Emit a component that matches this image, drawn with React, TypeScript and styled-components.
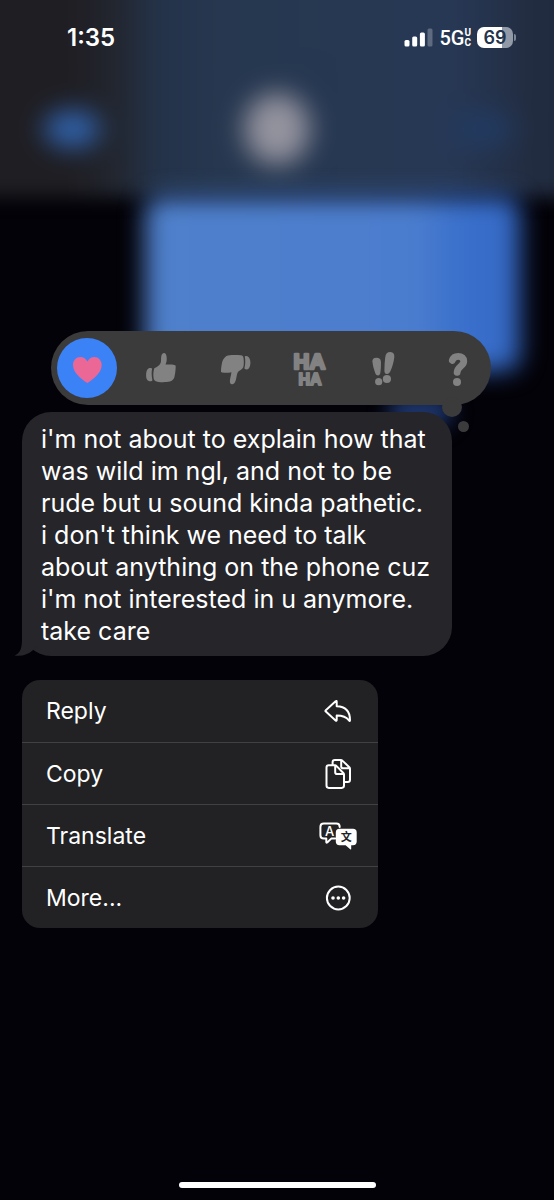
import React from "react";
import styled, { createGlobalStyle } from "styled-components";

const GlobalStyle = createGlobalStyle`
  * { box-sizing: border-box; }
  body {
    margin: 0;
    background: #030208;
    font-family: Inter, "Liberation Sans", sans-serif;
    -webkit-font-smoothing: antialiased;
  }
  button { font: inherit; color: inherit; border: 0; margin: 0; background: none; }
`;

const Screen = styled.div`
  position: relative;
  min-height: 100vh;
  display: flex;
  flex-direction: column;
  overflow: hidden;
  color: #fff;
  background: #030208;
`;

/* Blurred conversation behind the overlay */
const Backdrop = styled.div`
  position: absolute;
  inset: 0;
  overflow: hidden;
`;

const BlurredHeader = styled.div`
  display: flex;
  align-items: center;
  justify-content: space-between;
  height: 237px;
  margin: -40px -40px 0;
  padding: 100px 80px 0 84px;
  filter: blur(9px);
  background: linear-gradient(
    90deg,
    #1f1e22 0,
    #1f1e23 110px,
    #22262f 155px,
    #24334a 200px,
    #26374f 260px,
    #273855 calc(100% - 140px),
    #222c40 calc(100% - 60px),
    #202a3e 100%
  );
`;

const Glow = styled.div<{ $w: number; $h: number; $color: string }>`
  width: ${(p) => p.$w}px;
  height: ${(p) => p.$h}px;
  border-radius: 50%;
  background: ${(p) => p.$color};
  filter: blur(10px);
`;

const BlurredBubble = styled.div`
  height: 174px;
  margin: 0 34px 0 145px;
  border-radius: 16px;
  background: linear-gradient(90deg, #4f80cb 0, #4b7dce 72%, #3a70cc 84%, #3468c4 100%);
  filter: blur(12px);
`;

const BlurredTail = styled.div`
  width: 64px;
  height: 30px;
  margin: 26px 102px 0 auto;
  border-radius: 15px;
  background: #1f3870;
  filter: blur(10px);
`;

const StatusBar = styled.header`
  position: relative;
  display: flex;
  align-items: center;
  justify-content: space-between;
  height: 75px;
  padding: 0 38px 0 67px;
`;

const Clock = styled.time`
  font-size: 24px;
  font-weight: 600;
  line-height: 24px;
`;

const StatusIcons = styled.div`
  display: flex;
  align-items: center;
  gap: 6px;
`;

const Network = styled.div`
  display: flex;
  align-items: center;
  font-family: Roboto, sans-serif;
  font-size: 20px;
  font-weight: 500;
  line-height: 20px;
`;

const NetworkSub = styled.span`
  display: flex;
  flex-direction: column;
  font-size: 10px;
  font-weight: 700;
  line-height: 10px;
`;

const Battery = styled.div`
  display: flex;
  align-items: center;
  gap: 1px;
`;

const BatteryBody = styled.div<{ $level: number }>`
  width: 36px;
  height: 21px;
  border-radius: 7px;
  text-align: center;
  font-size: 18px;
  font-weight: 600;
  line-height: 21px;
  color: #25344d;
  background: linear-gradient(90deg, #fff ${(p) => p.$level}%, #929aa8 ${(p) => p.$level}%);
`;

const BatteryNub = styled.div`
  width: 2px;
  height: 7px;
  border-radius: 0 2px 2px 0;
  background: #7e8797;
`;

const Content = styled.main`
  position: relative;
  display: flex;
  flex-direction: column;
  align-items: flex-start;
  padding: 256px 22px 0;
`;

const ReactionBar = styled.div`
  position: relative;
  display: flex;
  justify-content: space-between;
  align-items: center;
  width: 100%;
  max-width: 440px;
  height: 74px;
  margin: 0 0 7px 29px;
  padding: 0 4px 0 6px;
  border-radius: 37px;
  background: #3b3b3c;
`;

const Reaction = styled.button<{ $selected?: boolean }>`
  width: 60px;
  height: 60px;
  padding: 0;
  border-radius: 50%;
  color: #828282;
  background: ${(p) => (p.$selected ? "#3b82f7" : "transparent")};
  svg { display: block; }
`;

const ThoughtDot = styled.span<{ $size: number; $right: number; $drop: number }>`
  position: absolute;
  width: ${(p) => p.$size}px;
  height: ${(p) => p.$size}px;
  right: ${(p) => p.$right}px;
  bottom: ${(p) => -p.$drop}px;
  border-radius: 50%;
  background: #3b3b3c;
`;

const Bubble = styled.article`
  position: relative;
  width: 100%;
  max-width: 430px;
  padding: 11px 18px 9px 19px;
  border-radius: 29px;
  background: #26252a;
`;

const BubbleText = styled.p`
  margin: 0;
  font-size: 25px;
  line-height: 32px;
  white-space: pre-line;
`;

const BubbleTail = styled.svg`
  position: absolute;
  left: -8px;
  bottom: 0;
`;

const Menu = styled.ul`
  width: 100%;
  max-width: 356px;
  margin: 24px 0 0;
  padding: 0;
  list-style: none;
  border-radius: 18px;
  overflow: hidden;
  background: #222224;
`;

const MenuRow = styled.li`
  display: flex;
  height: 62px;
  & + & { border-top: 1px solid #414143; }
`;

const MenuButton = styled.button`
  display: flex;
  flex: 1;
  align-items: center;
  justify-content: space-between;
  padding: 0 20px 0 24px;
  font-size: 23px;
  line-height: 32px;
`;

const HomeIndicator = styled.div`
  position: relative;
  width: 197px;
  height: 6px;
  margin: auto auto 12px;
  border-radius: 3px;
  background: #fff;
`;

const SignalIcon = () => (
  <svg width="29" height="20" viewBox="0 0 29 20" fill="#fff" role="img" aria-label="Signal">
    <rect x="0.5" y="12" width="5" height="6.5" rx="1.5" />
    <rect x="8.2" y="8.5" width="5" height="10" rx="1.5" />
    <rect x="15.9" y="4.5" width="5" height="14" rx="1.5" />
    <rect x="23.5" y="0.5" width="5" height="18" rx="1.5" opacity="0.25" />
  </svg>
);

const ReactionSvg = ({ children }: { children: React.ReactNode }) => (
  <svg width="60" height="60" viewBox="0 0 60 60" fill="currentColor" aria-hidden="true">
    {children}
  </svg>
);

const Heart = () => (
  <ReactionSvg>
    <path
      fill="#eb6796"
      d="M30.4 45C24 41 16 34.5 16 27C16 22.3 19.3 19 23.4 19C26.6 19 29 20.8 30.4 23.6C31.8 20.8 34.2 19 37.3 19C41.4 19 44.7 22.3 44.7 27C44.7 34.5 36.8 41 30.4 45Z"
    />
  </ReactionSvg>
);

const ThumbUp = () => (
  <ReactionSvg>
    <path d="M23.3 30.2C26 29.2 29.4 27 29.9 24C30.3 21.5 29.8 19.8 30.4 17.8C30.9 16 31.8 15 33 15C34.4 15 35.1 16.1 35.4 17.8C35.8 20 35.9 22 35.4 24L34.5 26.6C37.5 26.4 41 26.4 43.3 26.9C44.4 27.1 44.8 27.6 44.7 28.6C44.6 31 44.5 34 43.8 37C43.5 39 43 41 41.6 42.1C39.8 43.5 37.9 44 35.6 44.1C32.4 44.3 29.3 44.3 26.4 43.7C24 43.1 22.9 42 22.6 40.2C22.2 37 22.2 33.5 23.3 30.2Z" />
    <path d="M17.8 30.2C19.3 29.7 20.9 29.9 21.1 30.8C20.4 34 20.5 38 21.4 42.2C21.2 43.3 19.3 43.6 17.7 43C15.9 42.3 15.1 40.5 15.1 37.3C15.1 33.8 15.9 30.9 17.8 30.2Z" />
  </ReactionSvg>
);

const ThumbDown = () => (
  <ReactionSvg>
    <path d="M20 19.2C21.8 17.4 24 17.1 26.7 17C29.8 16.8 32.9 16.8 35.8 17.3C37.5 17.6 38.3 18.4 38.5 19.9C38.9 22.4 39 25.2 38.6 27.8C38.3 30 37.2 31 35.6 32.1C33.8 33.2 32.7 34 32.2 35.7C31.4 38.4 31.3 41.4 30.2 43.8C29.5 45.5 28.3 46.4 27 46.2C25.4 46 24.8 44.7 24.9 42.9C25 40.4 26.1 37.6 26.4 34.3C23.3 35 19.8 35 17.1 34.5C16.1 34.3 15.9 33.7 16 32.7C16.1 30.5 16.3 28 17 25C17.5 22.6 18.4 20.8 20 19.2Z" />
    <path d="M39.8 18.4C40.7 17.7 42.5 18 43.5 18.9C44.9 20.2 45.5 22.5 45.4 25.2C45.3 28 44.3 30.5 42.6 31.2C41.1 31.8 39.7 31.2 39.4 30.3C40.4 26.8 40.5 22 39.8 18.4Z" />
  </ReactionSvg>
);

const HaHa = () => (
  <ReactionSvg>
    <g
      fontFamily='"Liberation Sans", sans-serif'
      fontWeight="700"
      stroke="currentColor"
      strokeLinejoin="round"
      textAnchor="middle"
    >
      <text x="30.4" y="31.2" fontSize="22" strokeWidth="2.6">HA</text>
      <text x="31" y="46.6" fontSize="16" strokeWidth="2">HA</text>
    </g>
  </ReactionSvg>
);

const Bangs = () => (
  <ReactionSvg>
    <path d="M19.4 23.6C19.2 21.2 20.6 19.9 23.3 19.7C26 19.6 27.7 20.8 27.9 23.5C28.1 27.5 27.8 31.5 27.3 35C27 36.7 26.3 37.4 25.1 37.4C23.8 37.4 22.9 36.7 22.3 35.2C20.9 31.6 19.8 27.6 19.4 23.6Z" />
    <circle cx="25.7" cy="43.7" r="3.6" />
    <path d="M32.2 19.4C32.6 15.8 34.4 14 37.5 14.1C40.4 14.2 41.6 16 41.3 19.3C40.8 24 39.4 29 37.5 33C36.5 35.2 35.3 36.2 33.7 36C32.1 35.8 31.4 34.6 31.4 32.4C31.4 28 31.7 23.5 32.2 19.4Z" />
    <circle cx="33.9" cy="41" r="4.1" />
  </ReactionSvg>
);

const Question = () => (
  <ReactionSvg>
    <path
      d="M25.3 22.4C26.2 19.6 28.3 18.3 31.2 18.3C34.6 18.3 36.8 20.2 36.8 23.2C36.8 28.2 30.4 28.4 30.1 34.4"
      fill="none"
      stroke="currentColor"
      strokeWidth="6.8"
      strokeLinecap="round"
      strokeLinejoin="round"
    />
    <circle cx="30" cy="44" r="4" />
  </ReactionSvg>
);

const MenuSvg = ({ children }: { children: React.ReactNode }) => (
  <svg
    width="39"
    height="32"
    viewBox="0 0 39 32"
    fill="none"
    stroke="#fff"
    strokeWidth="2"
    strokeLinejoin="round"
    strokeLinecap="round"
    aria-hidden="true"
  >
    {children}
  </svg>
);

const ReplyIcon = () => (
  <MenuSvg>
    <path d="M6.8 15.2L16.6 6.3Q17.7 5.5 17.7 6.8V11.2C26.4 11.4 31 16.4 31 25.2Q30.9 26.6 30 25.4C27.3 21.8 23.8 20.5 17.7 20.5V25Q17.7 26.3 16.6 25.4L6.8 16.6Q6 15.9 6.8 15.2Z" />
  </MenuSvg>
);

const CopyIcon = () => (
  <MenuSvg>
    <path d="M16 7.2H9.8Q7.5 7.2 7.5 9.5V27.6Q7.5 29.9 9.8 29.9H22.7Q25 29.9 25 27.6V16.6Q25 15.7 24.3 15L17.4 7.9Q16.8 7.2 16 7.2ZM16.2 7.6V14.2Q16.2 16 18 16H24.6" />
    <path d="M13.6 6.8V4.2Q13.6 1.9 15.9 1.9H21.9Q22.7 1.9 23.4 2.6L30.3 9.2Q31 9.9 31 10.8V21.7Q31 24 28.7 24H25.4M22.2 2.3V8.4Q22.2 10.2 24 10.2H30.6" />
  </MenuSvg>
);

const TranslateIcon = () => (
  <MenuSvg>
    <path d="M16.2 18.6H12.2L8.2 22.4Q7.3 23 7.3 22V18.6H4.8Q1.4 18.6 1.4 15.2V7Q1.4 3.6 4.8 3.6H17.3Q20.7 3.6 20.7 7" />
    <path
      d="M20.5 8.8H34Q37.7 8.8 37.7 12.5V21.6Q37.7 25.3 34 25.3H32.2V28.8Q32.2 30 31.2 29.2L26.6 25.3H20.5Q16.8 25.3 16.8 21.6V12.5Q16.8 8.8 20.5 8.8Z"
      fill="#fff"
      stroke="none"
    />
    <g stroke="none" textAnchor="middle">
      <text x="10.7" y="15.8" fill="#fff" fontFamily="Inter, sans-serif" fontSize="13" fontWeight="500">A</text>
      <text x="27.2" y="21.2" fill="#222224" fontFamily='"Noto Sans CJK SC", sans-serif' fontSize="11" fontWeight="700">文</text>
    </g>
  </MenuSvg>
);

const MoreIcon = () => (
  <MenuSvg>
    <circle cx="19.3" cy="16" r="11.4" />
    <g fill="#fff" stroke="none">
      <circle cx="14" cy="16" r="1.8" />
      <circle cx="19.3" cy="16" r="1.8" />
      <circle cx="24.6" cy="16" r="1.8" />
    </g>
  </MenuSvg>
);

const reactions = [
  { label: "Love", Icon: Heart, selected: true },
  { label: "Like", Icon: ThumbUp },
  { label: "Dislike", Icon: ThumbDown },
  { label: "Laugh", Icon: HaHa },
  { label: "Emphasize", Icon: Bangs },
  { label: "Question", Icon: Question },
];

const actions = [
  { label: "Reply", Icon: ReplyIcon },
  { label: "Copy", Icon: CopyIcon },
  { label: "Translate", Icon: TranslateIcon },
  { label: "More...", Icon: MoreIcon },
];

const message = `i'm not about to explain how that
was wild im ngl, and not to be
rude but u sound kinda pathetic.
i don't think we need to talk
about anything on the phone cuz
i'm not interested in u anymore.
take care`;

export default function App() {
  return (
    <Screen>
      <GlobalStyle />
      <Backdrop aria-hidden="true">
        <BlurredHeader>
          <Glow $w={56} $h={36} $color="#3266b2" />
          <Glow $w={66} $h={72} $color="#95949f" />
          <Glow $w={60} $h={36} $color="#223b62" />
        </BlurredHeader>
        <BlurredBubble />
        <BlurredTail />
      </Backdrop>

      <StatusBar>
        <Clock>1:35</Clock>
        <StatusIcons>
          <SignalIcon />
          <Network>
            5G
            <NetworkSub>
              <span>U</span>
              <span>C</span>
            </NetworkSub>
          </Network>
          <Battery>
            <BatteryBody $level={70}>69</BatteryBody>
            <BatteryNub />
          </Battery>
        </StatusIcons>
      </StatusBar>

      <Content>
        <ReactionBar role="group" aria-label="Reactions">
          {reactions.map(({ label, Icon, selected }) => (
            <Reaction key={label} type="button" aria-label={label} $selected={selected}>
              <Icon />
            </Reaction>
          ))}
          <ThoughtDot $size={20} $right={29} $drop={12} />
          <ThoughtDot $size={11} $right={22} $drop={27} />
        </ReactionBar>

        <Bubble>
          <BubbleTail width="24" height="30" viewBox="0 0 24 30" fill="#26252a" aria-hidden="true">
            <path d="M8 0V13C8 21.5 6.5 27.5 0.5 29.4C7.5 30.8 14 28.5 18.5 24.5L24 20V0Z" />
          </BubbleTail>
          <BubbleText>{message}</BubbleText>
        </Bubble>

        <Menu>
          {actions.map(({ label, Icon }) => (
            <MenuRow key={label}>
              <MenuButton type="button">
                {label}
                <Icon />
              </MenuButton>
            </MenuRow>
          ))}
        </Menu>
      </Content>

      <HomeIndicator />
    </Screen>
  );
}
